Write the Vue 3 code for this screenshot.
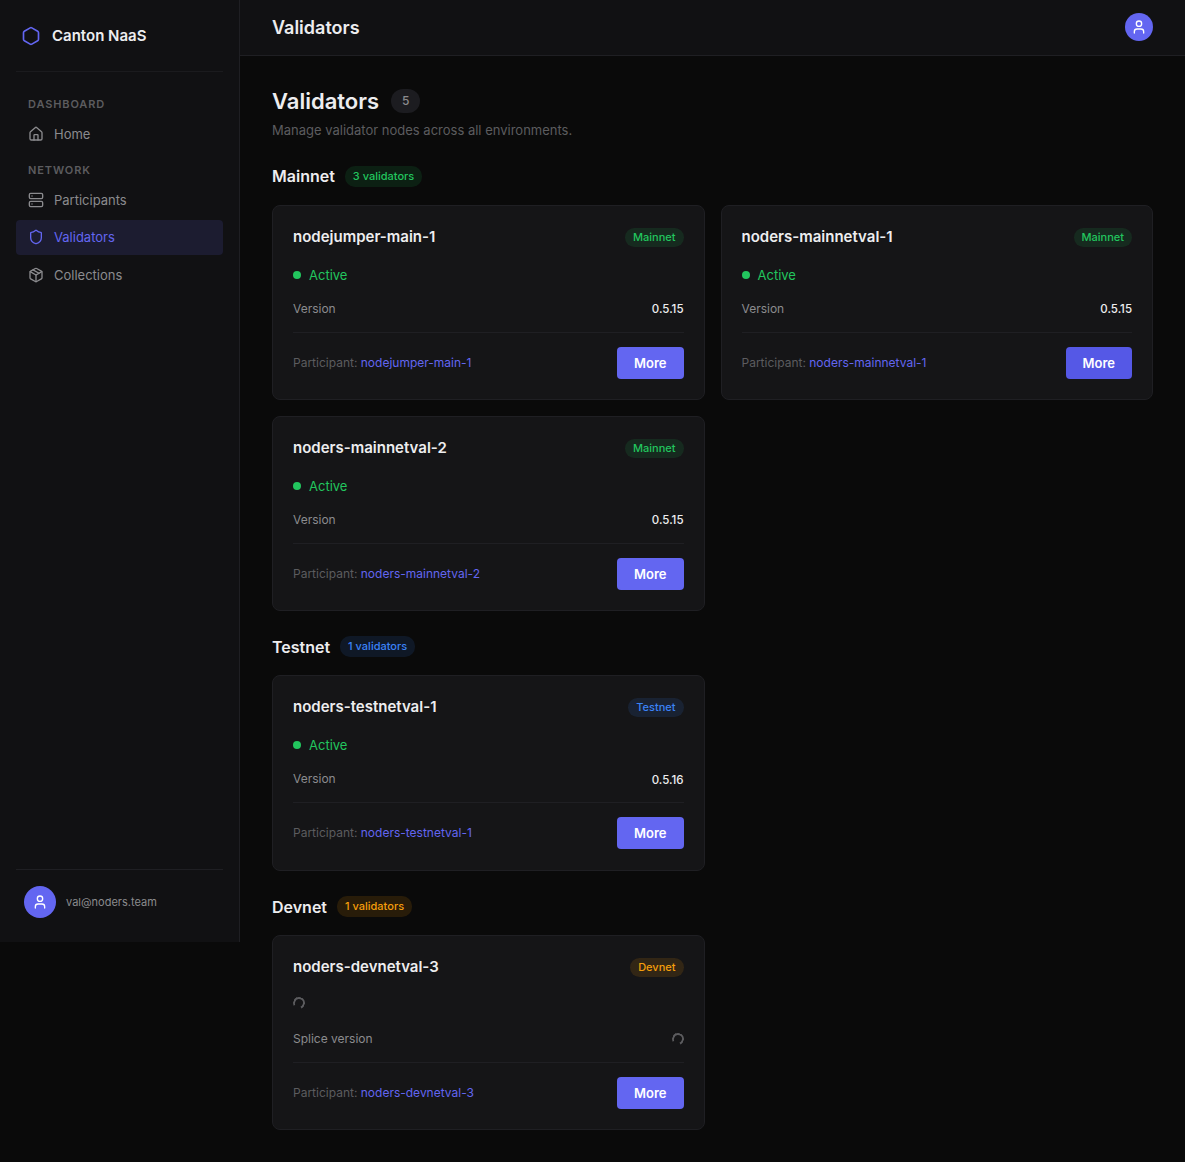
<template>
  <div class="layout">
    <!-- Sidebar -->
    <aside class="sidebar">
      <div class="brand">
        <svg class="brand-icon" viewBox="0 0 24 24">
          <path
            d="M21 16V8a2 2 0 0 0-1-1.73l-7-4a2 2 0 0 0-2 0l-7 4A2 2 0 0 0 3 8v8a2 2 0 0 0 1 1.73l7 4a2 2 0 0 0 2 0l7-4A2 2 0 0 0 21 16z"
          />
        </svg>
        <span class="brand-name">Canton NaaS</span>
      </div>

      <nav class="nav">
        <div v-for="group in navGroups" :key="group.title" class="nav-group">
          <div class="nav-title">{{ group.title }}</div>
          <a
            v-for="item in group.items"
            :key="item.label"
            class="nav-item"
            :class="{ active: item.label === activeItem }"
            @click="activeItem = item.label"
          >
            <svg class="nav-icon" viewBox="0 0 24 24">
              <path v-for="d in item.paths" :key="d" :d="d" />
            </svg>
            <span class="nav-label">{{ item.label }}</span>
          </a>
        </div>
      </nav>

      <div class="sidebar-footer">
        <div class="avatar avatar-lg">
          <svg viewBox="0 0 24 24">
            <circle cx="12" cy="7" r="4" />
            <path d="M19 21v-2a4 4 0 0 0-4-4H9a4 4 0 0 0-4 4v2" />
          </svg>
        </div>
        <span class="user-email">val@noders.team</span>
      </div>
    </aside>

    <!-- Main area -->
    <div class="main">
      <header class="topbar">
        <span class="topbar-title">Validators</span>
        <div class="avatar avatar-sm">
          <svg viewBox="0 0 24 24">
            <circle cx="12" cy="7" r="4" />
            <path d="M19 21v-2a4 4 0 0 0-4-4H9a4 4 0 0 0-4 4v2" />
          </svg>
        </div>
      </header>

      <main class="content">
        <div class="page-head">
          <h1>Validators</h1>
          <span class="count">{{ total }}</span>
        </div>
        <p class="page-desc">Manage validator nodes across all environments.</p>

        <section v-for="env in environments" :key="env.name" class="env">
          <div class="env-head">
            <h2>{{ env.name }}</h2>
            <span class="badge badge-count" :class="env.type">{{ env.validators.length }} validators</span>
          </div>

          <div class="grid">
            <div v-for="v in env.validators" :key="v.name" class="card">
              <div class="card-head">
                <h3>{{ v.name }}</h3>
                <span class="badge" :class="env.type">{{ env.name }}</span>
              </div>

              <div class="status" :class="{ loading: !v.version }">
                <template v-if="v.version">
                  <span class="dot"></span>
                  <span class="status-label">Active</span>
                </template>
                <span v-else class="spinner"></span>
              </div>

              <div class="row">
                <span class="row-label">{{ v.version ? 'Version' : 'Splice version' }}</span>
                <span v-if="v.version" class="row-value">{{ v.version }}</span>
                <span v-else class="spinner"></span>
              </div>

              <div class="card-foot">
                <span class="participant">Participant: <a>{{ v.name }}</a></span>
                <button type="button" class="btn-more" :class="{ focused: v.focused }">More</button>
              </div>
            </div>
          </div>
        </section>
      </main>
    </div>
  </div>
</template>

<script setup>
import { ref, computed } from 'vue'

const activeItem = ref('Validators')

const navGroups = [
  {
    title: 'Dashboard',
    items: [
      {
        label: 'Home',
        paths: [
          'M15 21v-7a1 1 0 0 0-1-1h-4a1 1 0 0 0-1 1v7',
          'M3 10a2 2 0 0 1 .709-1.528l7-5.999a2 2 0 0 1 2.582 0l7 5.999A2 2 0 0 1 21 10v9a2 2 0 0 1-2 2H5a2 2 0 0 1-2-2z',
        ],
      },
    ],
  },
  {
    title: 'Network',
    items: [
      {
        label: 'Participants',
        paths: [
          'M4 2h16a2 2 0 0 1 2 2v4a2 2 0 0 1-2 2H4a2 2 0 0 1-2-2V4a2 2 0 0 1 2-2z',
          'M4 14h16a2 2 0 0 1 2 2v4a2 2 0 0 1-2 2H4a2 2 0 0 1-2-2v-4a2 2 0 0 1 2-2z',
          'M6 6h.01',
          'M6 18h.01',
        ],
      },
      {
        label: 'Validators',
        paths: [
          'M20 13c0 5-3.5 7.5-7.66 8.95a1 1 0 0 1-.67-.01C7.5 20.5 4 18 4 13V6a1 1 0 0 1 1-1c2 0 4.5-1.2 6.24-2.72a1.17 1.17 0 0 1 1.52 0C14.51 3.81 17 5 19 5a1 1 0 0 1 1 1z',
        ],
      },
      {
        label: 'Collections',
        paths: [
          'M21 16V8a2 2 0 0 0-1-1.73l-7-4a2 2 0 0 0-2 0l-7 4A2 2 0 0 0 3 8v8a2 2 0 0 0 1 1.73l7 4a2 2 0 0 0 2 0l7-4A2 2 0 0 0 21 16z',
          'M3.3 7L12 12l8.7-5',
          'M12 22V12',
          'M16.5 9.4l-9-5.13',
        ],
      },
    ],
  },
]

const environments = [
  {
    name: 'Mainnet',
    type: 'mainnet',
    validators: [
      { name: 'nodejumper-main-1', version: '0.5.15' },
      { name: 'noders-mainnetval-1', version: '0.5.15', focused: true },
      { name: 'noders-mainnetval-2', version: '0.5.15' },
    ],
  },
  {
    name: 'Testnet',
    type: 'testnet',
    validators: [{ name: 'noders-testnetval-1', version: '0.5.16' }],
  },
  {
    name: 'Devnet',
    type: 'devnet',
    // version is still loading
    validators: [{ name: 'noders-devnetval-3', version: null }],
  },
]

const total = computed(() => environments.reduce((sum, env) => sum + env.validators.length, 0))
</script>

<style>
body {
  background: #0a0a0a;
}
</style>

<style scoped>
* {
  box-sizing: border-box;
}

.layout {
  display: flex;
  align-items: flex-start;
  min-height: 1162px;
  background: #0a0a0a;
  color: #ededef;
  font-family: Inter, 'Liberation Sans', sans-serif;
  font-size: 14px;
  line-height: 1.5;
}

h1,
h2,
h3,
p {
  margin: 0;
}

svg {
  display: block;
  fill: none;
  stroke: currentColor;
  stroke-width: 2;
  stroke-linecap: round;
  stroke-linejoin: round;
}

/* Sidebar */
.sidebar {
  display: flex;
  flex-direction: column;
  flex-shrink: 0;
  width: 240px;
  height: 942px;
  padding: 0 16px 16px;
  background: #111113;
  border-right: 1px solid #1f1f23;
}

.brand {
  display: flex;
  align-items: center;
  gap: 11px;
  height: 71.5px;
  padding: 1px 0 0 5px;
  border-bottom: 1px solid #1b1b1e;
}

.brand-icon {
  width: 20px;
  height: 20px;
  color: #6366f1;
}

.brand-name {
  font-size: 15px;
  font-weight: 600;
}

.nav {
  flex: 1;
  padding-top: 24px;
}

.nav-group {
  margin-bottom: 10px;
}

.nav-title {
  padding: 0 12px;
  margin-bottom: 4px;
  font-size: 11px;
  font-weight: 600;
  line-height: 16.5px;
  letter-spacing: 0.08em;
  text-transform: uppercase;
  color: #5c5c5f;
}

.nav-item {
  display: flex;
  align-items: center;
  gap: 10px;
  height: 35.5px;
  padding: 0 12px;
  margin-bottom: 2px;
  border-radius: 4px;
  font-size: 13px;
  color: #8b8b8e;
  cursor: pointer;
}

.nav-item.active {
  background: #1c1c30;
  color: #6366f1;
}

.nav-icon {
  width: 16px;
  height: 16px;
}

.nav-label {
  padding-top: 1px;
}

.sidebar-footer {
  display: flex;
  align-items: center;
  gap: 10px;
  padding: 16px 8px 8px;
  border-top: 1px solid #1f1f23;
}

.user-email {
  font-size: 11px;
  color: #8b8b8e;
}

.avatar {
  display: flex;
  align-items: center;
  justify-content: center;
  border-radius: 50%;
  background: #6366f1;
  color: #fff;
}

.avatar svg {
  width: 16px;
  height: 16px;
}

.avatar-lg {
  width: 32px;
  height: 32px;
}

.avatar-sm {
  width: 28px;
  height: 28px;
}

/* Main area */
.main {
  flex: 1;
  min-width: 0;
}

.topbar {
  display: flex;
  align-items: center;
  justify-content: space-between;
  height: 55.5px;
  padding: 0 32px;
  background: #111113;
  border-bottom: 1px solid #1f1f23;
}

.topbar-title {
  font-size: 18px;
  font-weight: 600;
}

.content {
  padding: 29px 32px 32px;
}

.page-head {
  display: flex;
  align-items: center;
  gap: 12px;
  height: 33px;
}

h1 {
  font-size: 22px;
  font-weight: 600;
  line-height: 33px;
}

.count {
  padding: 3px 11px;
  border-radius: 12px;
  background: #1c1c20;
  font-size: 12px;
  font-weight: 500;
  color: #8b8b8e;
}

.page-desc {
  margin: 2.5px 0 23.75px;
  font-size: 13px;
  line-height: 20.5px;
  color: #5c5c5f;
}

.env {
  margin-bottom: 24px;
}

.env:last-child {
  margin-bottom: 0;
}

.env-head {
  display: flex;
  align-items: center;
  gap: 10px;
  height: 24px;
  margin-bottom: 16.5px;
}

h2 {
  font-size: 16px;
  font-weight: 600;
}

.badge {
  padding: 1px 8px;
  border-radius: 10px;
  font-size: 11px;
  font-weight: 500;
  line-height: 17px;
}

.badge-count {
  padding: 2px 8px;
}

.mainnet {
  background: rgba(34, 197, 94, 0.12);
  color: #22c55e;
}

.testnet {
  background: rgba(59, 130, 246, 0.12);
  color: #3b82f6;
}

.devnet {
  background: rgba(245, 158, 11, 0.13);
  color: #f59e0b;
}

.grid {
  display: grid;
  grid-template-columns: repeat(2, 1fr);
  gap: 16px;
}

.card {
  height: 195.1px;
  padding: 20px;
  background: #151517;
  border: 1px solid #1f1f23;
  border-radius: 8px;
}

.card-head {
  display: flex;
  align-items: center;
  justify-content: space-between;
  height: 22.5px;
  margin-bottom: 16px;
}

h3 {
  font-size: 15px;
  font-weight: 600;
}

.status {
  display: flex;
  align-items: center;
  gap: 8px;
  height: 21px;
  margin-bottom: 14px;
  font-size: 13px;
  color: #22c55e;
}

.status.loading {
  padding-bottom: 4px;
}

.status-label {
  padding-top: 1.5px;
}

.dot {
  width: 8px;
  height: 8px;
  border-radius: 50%;
  background: #22c55e;
}

.spinner {
  width: 12px;
  height: 12px;
  border: 2px solid #5c5c5f;
  border-bottom-color: transparent;
  border-radius: 50%;
  transform: rotate(20deg);
}

.row {
  display: flex;
  align-items: center;
  justify-content: space-between;
  height: 19px;
  margin-bottom: 13.5px;
  font-size: 12px;
}

.row-label {
  color: #8b8b8e;
}

.row-value {
  padding-top: 1.5px;
  font-size: 11.5px;
  font-weight: 500;
}

.card-foot {
  display: flex;
  align-items: center;
  justify-content: space-between;
  padding-top: 14px;
  border-top: 1px solid #1f1f23;
}

.participant {
  font-size: 12px;
  color: #5c5c5f;
}

.participant a {
  color: #6366f1;
}

.btn-more {
  height: 32px;
  padding: 0 17px;
  border: none;
  border-radius: 4px;
  background: #6366f1;
  font-family: inherit;
  font-size: 13px;
  font-weight: 600;
  color: #fff;
  cursor: pointer;
}

.btn-more:hover,
.btn-more.focused {
  background: #5558e6;
}
</style>
